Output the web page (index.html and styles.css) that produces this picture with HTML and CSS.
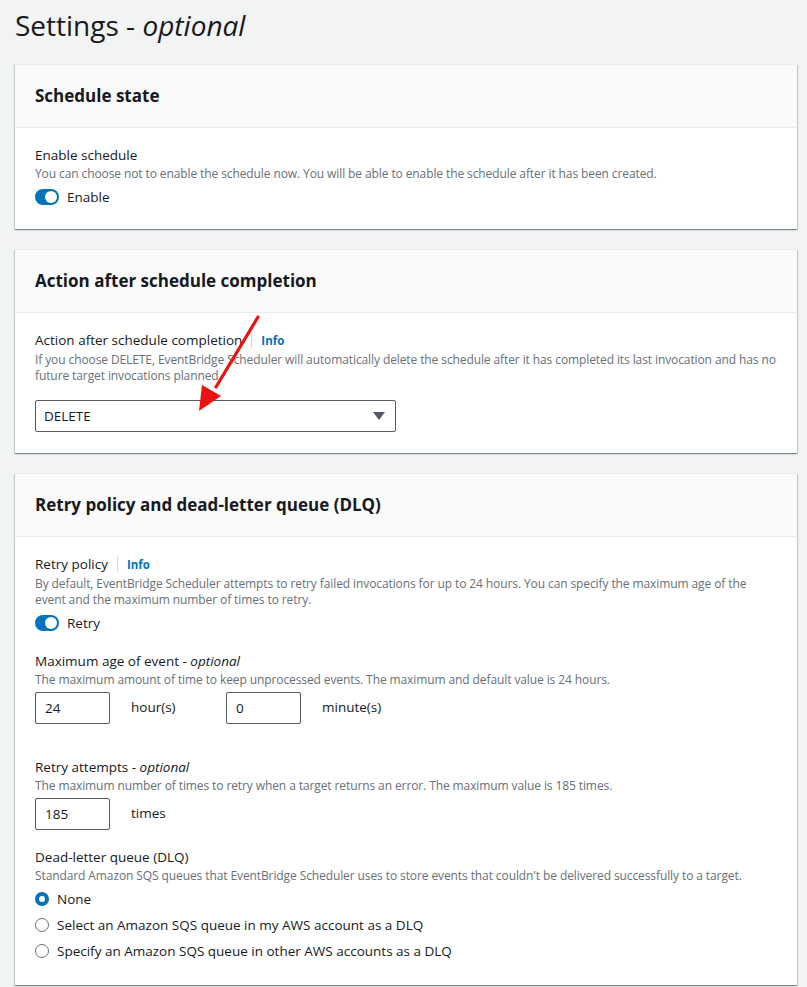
FILE: index.html
```html
<!DOCTYPE html>
<html lang="en">
<head>
<meta charset="utf-8">
<title>Settings - optional</title>
<link rel="stylesheet" href="styles.css">
</head>
<body>
<div class="page">
  <h1 class="page-title">Settings - <i>optional</i></h1>

  <section class="card">
    <header class="card-header"><h2>Schedule state</h2></header>
    <div class="card-body">
      <div class="label">Enable schedule</div>
      <div class="desc">You can choose not to enable the schedule now. You will be able to enable the schedule after it has been created.</div>
      <div class="toggle-row"><span class="toggle"><span class="knob"></span></span><span>Enable</span></div>
    </div>
  </section>

  <section class="card">
    <header class="card-header"><h2>Action after schedule completion</h2></header>
    <div class="card-body">
      <div class="label">Action after schedule completion<span class="sep"></span><span class="info">Info</span></div>
      <div class="desc">If you choose DELETE, EventBridge Scheduler will automatically delete the schedule after it has completed its last invocation and has no future target invocations planned.</div>
      <div class="select"><span>DELETE</span><svg width="12" height="8" viewBox="0 0 12 8"><path d="M0 0h12L6 8z" fill="#545b64"/></svg></div>
    </div>
  </section>

  <section class="card">
    <header class="card-header"><h2>Retry policy and dead-letter queue (DLQ)</h2></header>
    <div class="card-body">
      <div class="label">Retry policy<span class="sep"></span><span class="info">Info</span></div>
      <div class="desc">By default, EventBridge Scheduler attempts to retry failed invocations for up to 24 hours. You can specify the maximum age of the event and the maximum number of times to retry.</div>
      <div class="toggle-row"><span class="toggle"><span class="knob"></span></span><span>Retry</span></div>

      <div class="field">
        <div class="label">Maximum age of event - <i>optional</i></div>
        <div class="desc">The maximum amount of time to keep unprocessed events. The maximum and default value is 24 hours.</div>
        <div class="inputs">
          <div class="group"><span class="input">24</span><span class="unit">hour(s)</span></div>
          <div class="group"><span class="input">0</span><span class="unit">minute(s)</span></div>
        </div>
      </div>

      <div class="field field-wide">
        <div class="label">Retry attempts - <i>optional</i></div>
        <div class="desc">The maximum number of times to retry when a target returns an error. The maximum value is 185 times.</div>
        <div class="inputs">
          <div class="group"><span class="input">185</span><span class="unit">times</span></div>
        </div>
      </div>

      <div class="field">
        <div class="label">Dead-letter queue (DLQ)</div>
        <div class="desc">Standard Amazon SQS queues that EventBridge Scheduler uses to store events that couldn't be delivered successfully to a target.</div>
        <div class="radios">
          <div class="radio-row"><span class="radio checked"></span><span>None</span></div>
          <div class="radio-row"><span class="radio"></span><span>Select an Amazon SQS queue in my AWS account as a DLQ</span></div>
          <div class="radio-row"><span class="radio"></span><span>Specify an Amazon SQS queue in other AWS accounts as a DLQ</span></div>
        </div>
      </div>
    </div>
  </section>
</div>

<svg class="arrow" width="80" height="110" viewBox="0 0 80 110">
  <line x1="76" y1="6" x2="34" y2="76" stroke="#ee1111" stroke-width="3.2" stroke-linecap="round"/>
  <path d="M17 100 L20 74 L39 85 Z" fill="#ee1111"/>
</svg>
</body>
</html>
```
FILE: styles.css
```css
* { box-sizing: border-box; }
html, body { margin: 0; padding: 0; }
body {
  background: #f2f3f3;
  font-family: "Open Sans", "Noto Sans", sans-serif;
  color: #16191f;
  position: relative;
  width: 807px;
  height: 987px;
  overflow: hidden;
}
.page { padding: 0 10px 0 15px; }
.page-title {
  margin: 0;
  padding-top: 5px;
  height: 64px;
  font-size: 28px;
  font-weight: 400;
  line-height: 40px;
}
.card {
  background: #fff;
  border-top: 1px solid #eaeded;
  box-shadow: 0 1px 1px 0 rgba(0,28,36,.3), 1px 1px 1px 0 rgba(0,28,36,.15), -1px 1px 1px 0 rgba(0,28,36,.15);
  margin-bottom: 20px;
}
.card-header {
  background: #fafafa;
  border-bottom: 1px solid #eaeded;
  height: 63px;
  padding: 0 20px 2px;
  display: flex;
  align-items: center;
}
.card-header h2 {
  margin: 0;
  font-size: 17px;
  font-weight: 700;
}
.card-body { padding: 16px 20px 21px; }
.label {
  font-size: 13.5px;
  line-height: 22px;
}
.sep {
  display: inline-block;
  width: 1px;
  height: 16px;
  background: #d5dbdb;
  margin: 0 9px 0 9px;
  vertical-align: -3px;
}
.info { color: #0073bb; font-weight: 700; font-size: 11.5px; }
.desc {
  font-size: 12px;
  line-height: 16px;
  color: #687078;
  letter-spacing: -0.1px;
}
.toggle-row {
  display: flex;
  align-items: center;
  gap: 8px;
  height: 22px;
  margin-top: 4px;
  font-size: 13.5px;
}
.toggle {
  width: 24px;
  height: 16px;
  border-radius: 8px;
  background: #0073bb;
  position: relative;
  display: inline-block;
}
.knob {
  position: absolute;
  top: 2px;
  right: 2px;
  width: 12px;
  height: 12px;
  border-radius: 50%;
  background: #fff;
}
.select {
  margin-top: 16px;
  width: 361px;
  height: 32px;
  border: 1px solid #545b64;
  border-radius: 2px;
  display: flex;
  align-items: center;
  justify-content: space-between;
  padding: 0 10px 0 8px;
  font-size: 13.5px;
}
.field { margin-top: 16px; }
.field-wide { margin-top: 32px; }
.inputs { display: flex; margin-top: 4px; }
.group { display: flex; align-items: center; width: 191px; }
.input {
  width: 75px;
  height: 32px;
  border: 1px solid #545b64;
  border-radius: 2px;
  display: flex;
  align-items: center;
  padding-left: 9px;
  font-size: 13.5px;
}
.unit { margin-left: 21px; font-size: 13.5px; position: relative; top: -1px; }
.radios { margin-top: 2px; }
.radio-row {
  display: flex;
  align-items: center;
  gap: 8px;
  height: 26px;
  font-size: 13.5px;
}
.radio {
  width: 14px;
  height: 14px;
  border-radius: 50%;
  border: 1.5px solid #687078;
  background: #fff;
}
.radio.checked { border: 4px solid #0073bb; }
i { font-style: italic; }
.arrow { position: absolute; left: 182px; top: 311px; }
```
